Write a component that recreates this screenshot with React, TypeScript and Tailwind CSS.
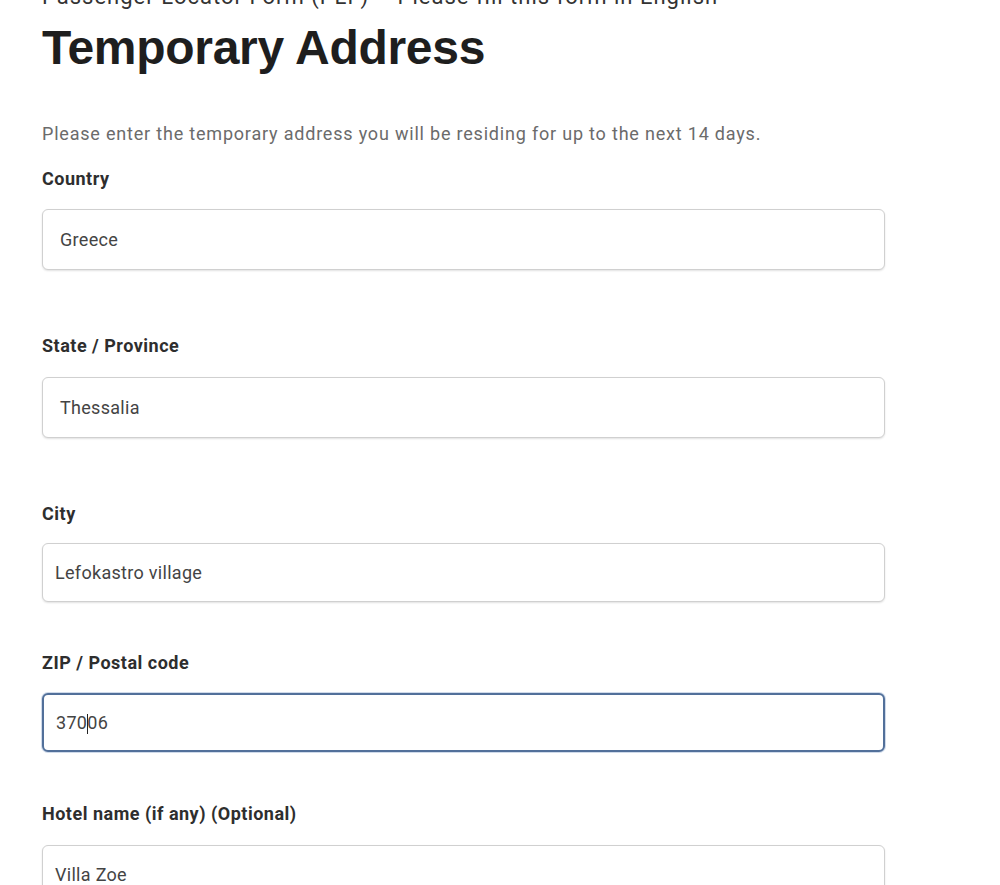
import React from "react"

type Field = {
  label: string
  value: string
  padX: string
  labelTop: string
  gap: string
  inputH: string
  focused?: boolean
  caretAt?: number
}

const fields: Field[] = [
  { label: "Country", value: "Greece", padX: "pl-[17px]", labelTop: "mt-[34px]", gap: "mt-[19px]", inputH: "h-[61px]" },
  { label: "State / Province", value: "Thessalia", padX: "pl-[17px]", labelTop: "mt-[65px]", gap: "mt-[20px]", inputH: "h-[61px]" },
  { label: "City", value: "Lefokastro village", padX: "pl-[12px]", labelTop: "mt-[65px]", gap: "mt-[18px]", inputH: "h-[59px]" },
  { label: "ZIP / Postal code", value: "37006", padX: "pl-[12px]", labelTop: "mt-[50px]", gap: "mt-[19px]", inputH: "h-[59px]", focused: true, caretAt: 3 },
  { label: "Hotel name (if any) (Optional)", value: "Villa Zoe", padX: "pl-[12px]", labelTop: "mt-[51px]", gap: "mt-[20px]", inputH: "h-[59px]" },
]

function FormField({ f }: { f: Field }) {
  return (
    <div className={f.labelTop}>
      <div className="text-[18px] font-bold text-[#2e2e2e] leading-[22px] tracking-[0.5px]">{f.label}</div>
      <div
        className={`${f.gap} ${f.inputH} w-[843px] rounded-[6px] bg-white flex items-center ${f.padX} ${
          f.focused
            ? "border-2 border-[#52709a] shadow-[0_0_0_1px_#cfdaea]"
            : "border border-[#d0d0d0] shadow-[0_1px_2px_rgba(0,0,0,0.12)]"
        }`}
      >
        <span className="text-[18px] text-[#444] tracking-[0.3px]">
          {f.caretAt !== undefined ? (
            <>
              {f.value.slice(0, f.caretAt)}
              <span className="inline-block w-[1px] h-[20px] bg-[#222] align-middle -mx-[0.5px]" />
              {f.value.slice(f.caretAt)}
            </>
          ) : (
            f.value
          )}
        </span>
      </div>
    </div>
  )
}

export default function App() {
  return (
    <main className="w-[1000px] h-[885px] overflow-hidden bg-white pl-[42px] font-['Roboto',_'Liberation_Sans',_sans-serif]">
      <div className="-mt-[14px] text-[22px] text-[#333] leading-[22px] tracking-[1px] whitespace-nowrap">
        Passenger Locator Form (PLF) – Please fill this form in English
      </div>
      <h1 className="mt-[13px] text-[48px] font-bold text-[#1e1e1e] leading-[54px] tracking-[-0.3px] font-['Liberation_Sans',_Arial,_sans-serif]">
        Temporary Address
      </h1>
      <p className="mt-[48px] text-[18px] text-[#6b6b6b] leading-[22px] tracking-[0.8px]">
        Please enter the temporary address you will be residing for up to the next 14 days.
      </p>
      <div className="-mt-[11px]">
        {fields.map((f) => (
          <FormField key={f.label} f={f} />
        ))}
      </div>
    </main>
  )
}
